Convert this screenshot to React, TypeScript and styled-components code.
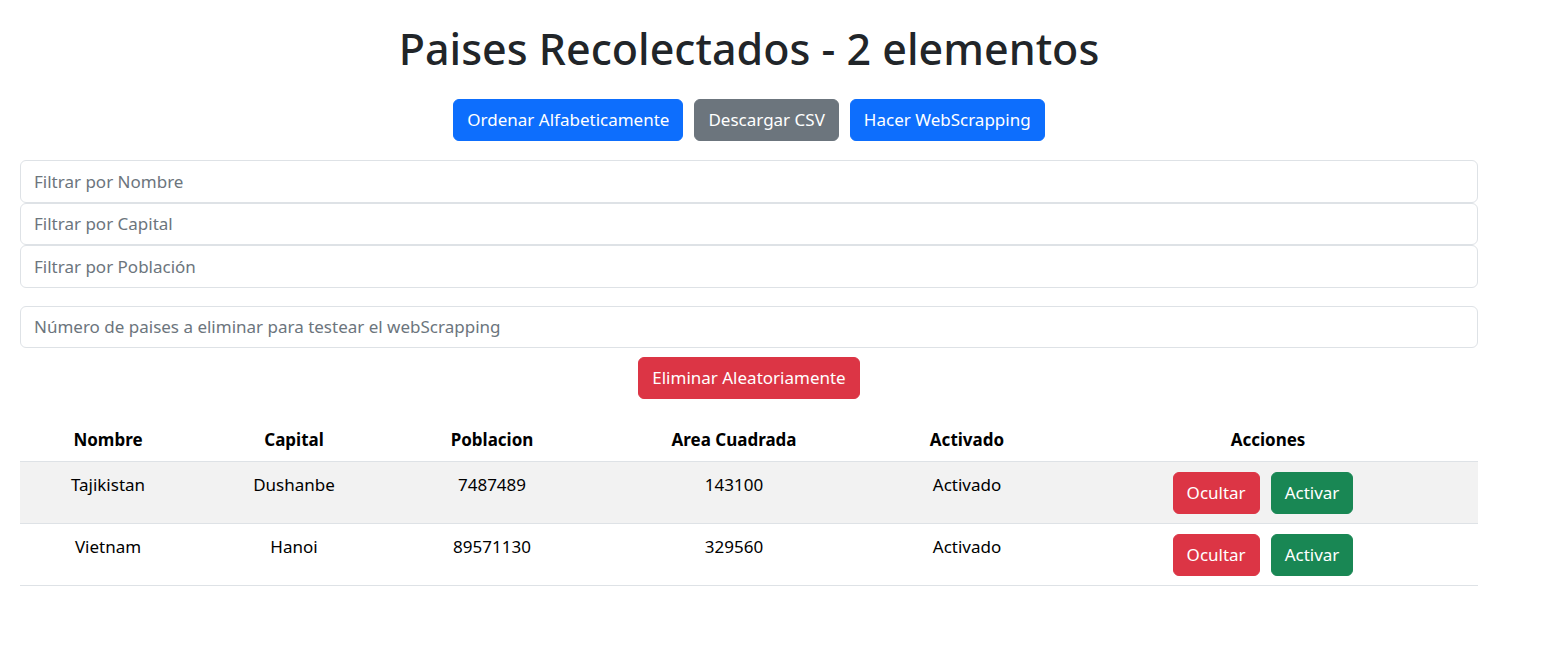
import React from "react"
import styled, { createGlobalStyle } from "styled-components"

const GlobalStyle = createGlobalStyle`
  body {
    margin: 0;
    background: #fff;
    font-family: "Noto Sans", "Open Sans", sans-serif;
    color: #212529;
  }
`

const Page = styled.div`
  width: 1458px;
  margin-left: 20px;
  padding-top: 22px;
`

const Title = styled.h1`
  margin: 0 0 24px;
  text-align: center;
  font-size: 43px;
  font-weight: 500;
  line-height: 53px;
  color: #212529;
`

const Toolbar = styled.div`
  display: flex;
  justify-content: center;
  gap: 11px;
  margin-bottom: 19px;
`

const colors: Record<string, string> = {
  primary: "#0d6efd",
  secondary: "#6c757d",
  danger: "#dc3545",
  success: "#198754",
}

const Button = styled.button<{ $variant: string }>`
  font-family: inherit;
  font-size: 17px;
  line-height: 26px;
  padding: 7px 13px;
  border: 1px solid ${(p) => colors[p.$variant]};
  border-radius: 6px;
  background: ${(p) => colors[p.$variant]};
  color: #fff;
  cursor: pointer;
`

const Filters = styled.div`
  display: flex;
  flex-direction: column;
  margin-bottom: 18px;
`

const Input = styled.input`
  box-sizing: border-box;
  width: 100%;
  height: 42.5px;
  padding: 0 13px;
  font-family: inherit;
  font-size: 17px;
  color: #212529;
  border: 1px solid #dee2e6;
  border-radius: 6px;
  background: #fff;
  &::placeholder {
    color: #6c757d;
  }
`

const DeleteRow = styled.div`
  display: flex;
  flex-direction: column;
  align-items: center;
  gap: 9px;
  margin-bottom: 20px;
`

const Table = styled.table`
  width: 100%;
  border-collapse: collapse;
  table-layout: fixed;
  color: #000;
  font-size: 17px;
`

const Th = styled.th`
  padding: 8px;
  line-height: 26px;
  font-weight: 700;
  text-align: center;
  border-bottom: 1px solid #dee2e6;
`

const Tr = styled.tr<{ $striped: boolean }>`
  background: ${(p) => (p.$striped ? "#f2f2f2" : "#fff")};
`

const Td = styled.td`
  padding: 10px 9px 9px;
  line-height: 26px;
  text-align: center;
  vertical-align: top;
  border-bottom: 1px solid #dee2e6;
`

const Actions = styled.div`
  display: flex;
  justify-content: center;
  gap: 11px;
  padding-right: 10px;
`

const widths = [176, 196, 200, 284, 182, 420]
const headers = ["Nombre", "Capital", "Poblacion", "Area Cuadrada", "Activado", "Acciones"]

const rows = [
  { nombre: "Tajikistan", capital: "Dushanbe", poblacion: 7487489, area: 143100, activado: "Activado" },
  { nombre: "Vietnam", capital: "Hanoi", poblacion: 89571130, area: 329560, activado: "Activado" },
]

export default function App() {
  return (
    <>
      <GlobalStyle />
      <Page>
        <Title>Paises Recolectados - {rows.length} elementos</Title>
        <Toolbar>
          <Button $variant="primary">Ordenar Alfabeticamente</Button>
          <Button $variant="secondary">Descargar CSV</Button>
          <Button $variant="primary">Hacer WebScrapping</Button>
        </Toolbar>
        <Filters>
          <Input placeholder="Filtrar por Nombre" />
          <Input placeholder="Filtrar por Capital" />
          <Input placeholder="Filtrar por Población" />
        </Filters>
        <DeleteRow>
          <Input placeholder="Número de paises a eliminar para testear el webScrapping" />
          <Button $variant="danger">Eliminar Aleatoriamente</Button>
        </DeleteRow>
        <Table>
          <colgroup>
            {widths.map((w, i) => (
              <col key={i} style={{ width: w }} />
            ))}
          </colgroup>
          <thead>
            <tr>
              {headers.map((h) => (
                <Th key={h}>{h}</Th>
              ))}
            </tr>
          </thead>
          <tbody>
            {rows.map((r, i) => (
              <Tr key={r.nombre} $striped={i % 2 === 0}>
                <Td>{r.nombre}</Td>
                <Td>{r.capital}</Td>
                <Td>{r.poblacion}</Td>
                <Td>{r.area}</Td>
                <Td>{r.activado}</Td>
                <Td>
                  <Actions>
                    <Button $variant="danger">Ocultar</Button>
                    <Button $variant="success">Activar</Button>
                  </Actions>
                </Td>
              </Tr>
            ))}
          </tbody>
        </Table>
      </Page>
    </>
  )
}
